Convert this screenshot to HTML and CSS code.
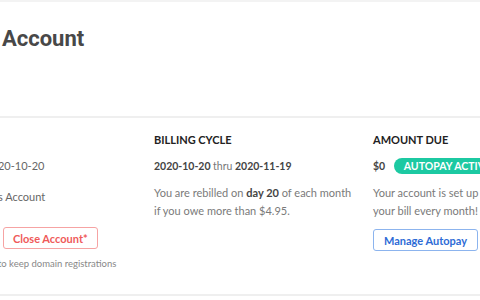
FILE: index.html
```html
<!DOCTYPE html>
<html lang="en">
<head>
    <meta charset="UTF-8">
    <meta name="viewport" content="width=device-width, initial-scale=1.0">
    <title>Account</title>
    <link rel="stylesheet" href="styles.css">
</head>
<body>
    <div class="account-card">
        <div class="account-header">
            <h1>Account</h1>
        </div>

        <div class="account-body">
            <div class="info-col">
                <h3>Details</h3>
                <p class="detail">Created on 2020-10-20</p>
                <p class="detail">Type: Business Account</p>
                <div class="actions">
                    <button class="btn btn-gray">Cancel</button>
                    <button class="btn btn-red">Close Account*</button>
                </div>
                <p class="note">*Close hosting to keep domain registrations</p>
            </div>

            <div class="info-col">
                <h3>Billing Cycle</h3>
                <p class="value">2020-10-20 <span class="light">thru</span> 2020-11-19</p>
                <p class="desc">You are rebilled on <strong>day 20</strong> of each month if you owe more than $4.95.</p>
            </div>

            <div class="info-col">
                <h3>Amount Due</h3>
                <p class="value">$0 <span class="badge">Autopay Active</span></p>
                <p class="desc nowrap">Your account is set up to automatically pay<br>your bill every month!</p>
                <div class="actions">
                    <button class="btn btn-blue">Manage Autopay</button>
                </div>
            </div>
        </div>
    </div>
</body>
</html>
```

FILE: styles.css
```css
body {
    margin: 0;
    font-family: Lato, "Open Sans", sans-serif;
    background-color: #fff;
    color: #444;
    overflow: hidden;
}

.account-card {
    border-top: 2px solid #f3f3f3;
    border-bottom: 2px solid #efefef;
}

.account-header {
    height: 116px;
    border-bottom: 2px solid #efefef;
    padding-left: 2px;
    box-sizing: border-box;
}

.account-header h1 {
    margin: 0;
    padding-top: 22px;
    font-family: Roboto, sans-serif;
    font-size: 22px;
    font-weight: 700;
    color: #484848;
    line-height: 30px;
}

.account-body {
    display: grid;
    grid-template-columns: repeat(3, 219px);
    margin-left: -65px;
    padding: 14px 0 23px;
}

.info-col h3 {
    margin: 0 0 8px;
    font-size: 11px;
    font-weight: 700;
    text-transform: uppercase;
    color: #222;
    line-height: 16px;
}

.info-col .value {
    margin: 0 0 8px;
    font-size: 10.5px;
    font-weight: 700;
    color: #444;
    line-height: 20px;
    white-space: nowrap;
}

.info-col .value .light {
    font-weight: 400;
    color: #777;
}

.info-col .detail {
    margin: 2px 0 11px -6px;
    font-size: 11px;
    color: #666;
    line-height: 20px;
    white-space: nowrap;
}

.info-col .detail + .detail {
    margin-top: 0;
    margin-left: -3px;
    margin-bottom: 20px;
}

.info-col .desc {
    margin: 0 0 9px;
    font-size: 11px;
    color: #7a7a7a;
    line-height: 18px;
    padding-right: 17px;
}

.info-col .desc.nowrap {
    white-space: nowrap;
}

.info-col .desc strong {
    color: #444;
}

.badge {
    display: inline-block;
    margin-left: 6px;
    padding: 0 10px;
    background-color: #1cc9a2;
    color: #fff;
    border-radius: 9px;
    font-size: 10.5px;
    line-height: 16px;
    text-transform: uppercase;
}

.actions {
    display: flex;
    gap: 8px;
}

.btn {
    height: 22px;
    padding: 0 10px;
    background: #fff;
    border: 1px solid #ccc;
    border-radius: 3px;
    font-family: Lato, sans-serif;
    font-size: 11px;
    font-weight: 700;
    white-space: nowrap;
    cursor: pointer;
}

.btn-gray {
    width: 60px;
    color: #777;
}

.btn-red {
    padding: 0 9px;
    border-color: #f6a3a3;
    color: #ef5a5a;
}

.btn-blue {
    border-color: #8cb4ee;
    color: #2d6bd6;
}

.note {
    margin: 8px 0 0;
    font-size: 9.5px;
    color: #888;
    line-height: 14px;
}
```
